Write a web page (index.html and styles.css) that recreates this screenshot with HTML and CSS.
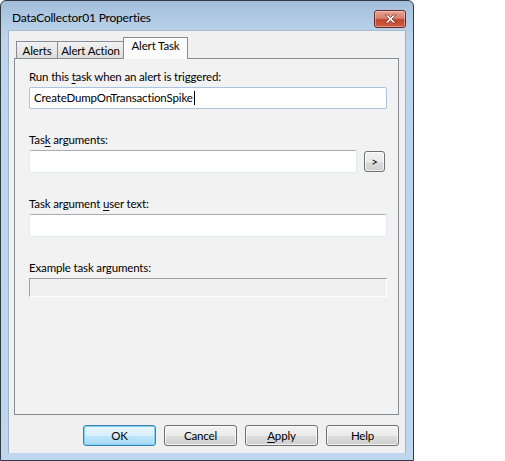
FILE: index.html
```html
<!DOCTYPE html>
<html>
<head>
<meta charset="utf-8">
<link rel="stylesheet" href="styles.css">
</head>
<body>
<div class="window">
  <div class="titlebar">
    <span class="title">DataCollector01 Properties</span>
    <span class="close">
      <svg width="15" height="10" viewBox="0 0 15 10"><path d="M2 1 L5 1 L7.5 3.5 L10 1 L13 1 L9 5 L13 9 L10 9 L7.5 6.5 L5 9 L2 9 L6 5 Z" fill="#fff" stroke="#7a3a34" stroke-width="0.8"/></svg>
    </span>
  </div>
  <div class="client">
    <div class="tabs">
      <div class="tab t1">Alerts</div>
      <div class="tab t2">Alert Action</div>
      <div class="tab active">Alert Task</div>
    </div>
    <div class="panel">
      <label class="lbl first">Run this <u>t</u>ask when an alert is triggered:</label>
      <div class="input focused">CreateDumpOnTransactionSpike<span class="caret"></span></div>

      <label class="lbl">Tas<u>k</u> arguments:</label>
      <div class="row">
        <div class="input grow"></div>
        <div class="btn small">&gt;</div>
      </div>

      <label class="lbl">Task argument <u>u</u>ser text:</label>
      <div class="input"></div>

      <label class="lbl">Example task arguments:</label>
      <div class="input disabled"></div>
    </div>
    <div class="buttons">
      <div class="btn default">OK</div>
      <div class="btn">Cancel</div>
      <div class="btn"><u>A</u>pply</div>
      <div class="btn">Help</div>
    </div>
  </div>
</div>
</body>
</html>
```

FILE: styles.css
```css
html, body {
  margin: 0;
  padding: 0;
  background: #ffffff;
}
body {
  font-family: "Lato", "Noto Sans", sans-serif;
  font-size: 11.5px;
  letter-spacing: -0.15px;
  color: #000;
}
.window {
  box-sizing: border-box;
  width: 414px;
  height: 461px;
  border: 1px solid #323a44;
  border-radius: 6px 6px 0 0;
  background: linear-gradient(#a3bedb 0px, #b3cbe5 20px, #bcd4ec 40px, #bed6ee 100%);
  padding: 0 7px 7px 7px;
  display: flex;
  flex-direction: column;
}
.titlebar {
  height: 29px;
  display: flex;
  align-items: center;
  position: relative;
}
.title {
  margin-left: 4px;
  margin-top: 4px;
  font-size: 12px;
  letter-spacing: -0.2px;
  color: #000;
}
.close {
  position: absolute;
  right: 0;
  top: 9px;
  box-sizing: border-box;
  width: 32px;
  height: 18px;
  border: 1px solid #6b2a24;
  border-radius: 3px;
  background: linear-gradient(#e8a393 0%, #d7806d 45%, #c0452f 55%, #cf5e45 100%);
  display: flex;
  align-items: center;
  justify-content: center;
  box-shadow: inset 0 0 0 1px rgba(255,255,255,0.35);
}
.client {
  flex: 1;
  background: #f0f0f0;
  border: 1px solid #9fb3c8;
  border-bottom: none;
  border-top-color: #a9bcd0;
  padding: 6px 6px 0 5px;
  display: flex;
  flex-direction: column;
}
.tabs {
  display: flex;
  align-items: flex-end;
  height: 21px;
  padding-left: 2px;
  position: relative;
  z-index: 1;
}
.tab {
  box-sizing: border-box;
  height: 17px;
  white-space: nowrap;
  border: 1px solid #898c95;
  border-bottom: none;
  background: linear-gradient(#f2f2f2, #e8e8e8 50%, #dcdcdc);
  display: flex;
  align-items: center;
  justify-content: center;
  line-height: 1;
  padding-top: 1px;
}
.t1 { width: 42px; }
.t2 { width: 67px; margin-left: -1px; }
.tab.active {
  height: 22px;
  width: 65px;
  background: #fcfcfc;
  margin-left: -1px;
  margin-bottom: -1px;
  padding-top: 0;
  padding-bottom: 5px;
}
.panel {
  box-sizing: border-box;
  height: 357px;
  border: 1px solid #898c95;
  background: #f2f2f2;
  padding: 10px 11px 0 14px;
  display: flex;
  flex-direction: column;
}
.lbl {
  display: block;
  height: 16px;
  line-height: 16px;
  margin-top: 23px;
  margin-bottom: 2px;
  white-space: nowrap;
}
.lbl.first { margin-top: 0; }
u { text-decoration: underline; text-underline-offset: 2px; }
.input {
  box-sizing: border-box;
  height: 23px;
  background: #fff;
  border: 1px solid #e3e9ef;
  border-top-color: #abadb3;
  border-radius: 2px;
  padding: 0 4px;
  display: flex;
  align-items: center;
  line-height: 1;
}
.input.focused {
  height: 22px;
  border: 1px solid #a9c4e0;
}
.caret {
  display: inline-block;
  width: 1px;
  height: 14px;
  background: #000;
  margin-left: 1px;
}
.row {
  display: flex;
  align-items: center;
  gap: 7px;
}
.grow { flex: 1; }
.input.disabled {
  height: 19px;
  background: #f0f0f0;
  border: 1px solid #fff;
  border-top-color: #a0a0a0;
  border-left-color: #a0a0a0;
  border-radius: 0;
}
.btn {
  box-sizing: border-box;
  width: 73px;
  height: 21px;
  border: 1px solid #707070;
  border-radius: 3px;
  background: linear-gradient(#f2f2f2 0%, #ebebeb 50%, #dddddd 51%, #cfcfcf 100%);
  box-shadow: inset 0 0 0 1px rgba(255,255,255,0.7);
  display: flex;
  align-items: center;
  justify-content: center;
  line-height: 1;
}
.btn.small {
  width: 21px;
  height: 21px;
  margin-right: 2px;
}
.btn.default {
  border-color: #3c7fb1;
  background: linear-gradient(#eaf6fd 0%, #d9f0fc 50%, #bee6fd 51%, #a7d9f5 100%);
  box-shadow: inset 0 0 0 1px #7fd5f5;
}
.buttons {
  display: flex;
  justify-content: flex-end;
  gap: 8px;
  margin-top: 10px;
}
```
